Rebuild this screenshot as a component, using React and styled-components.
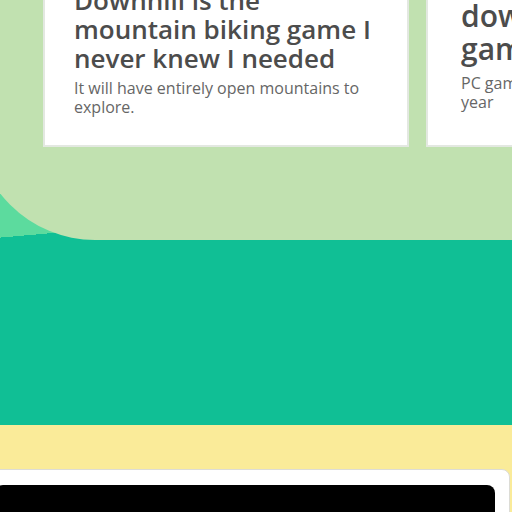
import React from 'react';
import styled, { createGlobalStyle } from 'styled-components';

const GlobalStyle = createGlobalStyle`
    body {
        margin: 0;
        font-family: "Open Sans", "Liberation Sans", sans-serif;
        background: #faeb99;
    }
`;

const Page = styled.div`
    width: 512px;
    height: 512px;
    overflow: hidden;
`;

const Hero = styled.section`
    background: linear-gradient(175deg, #5cdb9e calc(100% - 47px), #10bf95 calc(100% - 47px));
`;

const GreenPanel = styled.div`
    background-color: #c1e1b0;
    margin-left: -25px;
    padding: 0 0 93px 68px;
    border-bottom-left-radius: 120px;
`;

const CardRow = styled.div`
    display: flex;
    gap: 17px;
    margin-top: -36px;
`;

const Card = styled.article`
    flex-shrink: 0;
    width: 366px;
    box-sizing: border-box;
    background: #fff;
    border: 2px solid #e3e8e1;
    padding: ${(p) => (p.$featured ? '0 29px 33px 33px' : '20px 29px 28px')};
`;

const Headline = styled.h2`
    margin: 0;
    font-size: ${(p) => (p.$featured ? '30px' : '26px')};
    line-height: ${(p) => (p.$featured ? '33px' : '29px')};
    font-weight: 600;
    color: #4c4c4c;
`;

const Summary = styled.p`
    margin: ${(p) => (p.$featured ? '9px' : '6px')} 0 0;
    font-size: 16px;
    line-height: 19px;
    color: #666;
`;

const Band = styled.section`
    height: 185px;
    background-color: #10bf95;
`;

const Strip = styled.section`
    background-color: #faeb99;
    padding: 44px 2px 0 0;
`;

const Panel = styled.div`
    margin-left: -20px;
    background: #fff;
    border: 1px solid #dcdcd6;
    border-radius: 8px;
    padding: 15px 14px;
`;

const Screen = styled.div`
    height: 200px;
    background: #000;
    border-radius: 8px;
`;

function App() {
    return (
        <Page>
            <GlobalStyle />
            <Hero>
                <GreenPanel>
                    <CardRow>
                        <Card>
                            <Headline>Downhill is the mountain biking game I never knew I needed</Headline>
                            <Summary>It will have entirely open mountains to explore.</Summary>
                        </Card>
                        <Card $featured>
                            <Headline $featured>
                                The most-wanted
                                <br />
                                download is a racing
                                <br />
                                game
                            </Headline>
                            <Summary $featured>
                                PC gamers will get it later this
                                <br />
                                year
                            </Summary>
                        </Card>
                    </CardRow>
                </GreenPanel>
            </Hero>
            <Band />
            <Strip>
                <Panel>
                    <Screen />
                </Panel>
            </Strip>
        </Page>
    );
}

export default App;
